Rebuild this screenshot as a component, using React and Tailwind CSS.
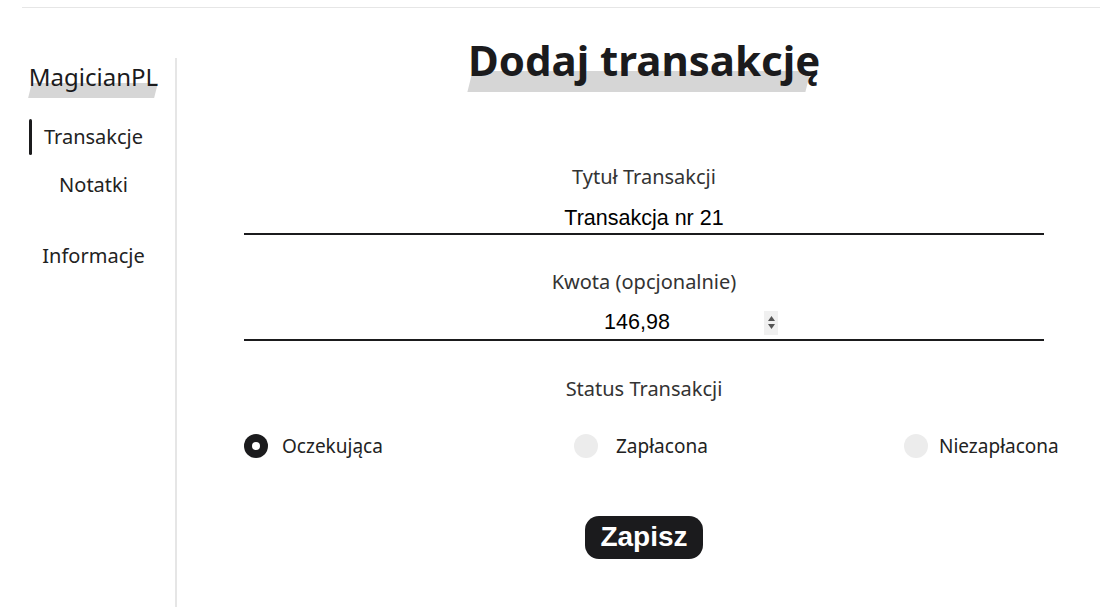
import { useState } from 'react';

const font = { fontFamily: '"Noto Sans", "Open Sans", sans-serif' };
const arial = { fontFamily: '"Liberation Sans", Arial, sans-serif' };

function NavItem({ label, active }) {
  return (
    <div className="relative flex h-[36px] items-center justify-center text-[20px] text-[#222]">
      {active && <span className="absolute left-[17px] top-0 h-full w-[3px] rounded-full bg-[#1b1b1d]" />}
      {label}
    </div>
  );
}

function Radio({ label, checked, gap }) {
  return (
    <label className="flex items-center text-[19px] text-[#222]">
      <span
        className={
          checked
            ? 'flex h-[24px] w-[24px] items-center justify-center rounded-full bg-[#1b1b1d]'
            : 'h-[24px] w-[24px] rounded-full bg-[#ececec]'
        }
      >
        {checked && <span className="h-[8px] w-[8px] rounded-full bg-white" />}
      </span>
      <span className={gap}>{label}</span>
    </label>
  );
}

export default function App() {
  const [title, setTitle] = useState('Transakcja nr 21');
  const [amount, setAmount] = useState('146,98');

  return (
    <div className="min-h-screen bg-white" style={font}>
      <div className="ml-[22px] mt-[7px] h-px bg-[#e6e6e6]" />
      <div className="flex">
        <aside className="mt-[50px] h-[549px] w-[177px] shrink-0 border-r-2 border-[#e6e6e6] pl-[12px]">
          <div className="flex justify-center pt-[3px]">
            <div className="relative">
              <span className="absolute left-[1px] top-[22px] h-[15px] w-[126px] -skew-x-[14deg] bg-[#d6d6d6]" />
              <span className="relative block text-[24px] leading-[32px] text-[#1b1b1d]">MagicianPL</span>
            </div>
          </div>
          <nav className="mt-[26px] flex flex-col">
            <NavItem label="Transakcje" active />
            <div className="h-[12px]" />
            <NavItem label="Notatki" />
            <div className="h-[35px]" />
            <NavItem label="Informacje" />
          </nav>
        </aside>

        <main className="flex-1 pl-[11px]">
          <div className="mx-auto flex w-[800px] flex-col items-center">
            <div className="relative mt-[20px]">
              <span className="absolute left-[2px] top-[43px] h-[21px] w-[338px] -skew-x-[14deg] bg-[#d6d6d6]" />
              <h1 className="relative text-[42px] font-bold leading-[64px] text-[#1b1b1d]">Dodaj transakcję</h1>
            </div>

            <form className="mt-[71px] flex w-full flex-col items-center" onSubmit={(e) => e.preventDefault()}>
              <label className="text-[20px] leading-[28px] text-[#333]">Tytuł Transakcji</label>
              <div className="mt-[10px] w-full border-b-2 border-[#1b1b1d]">
                <input
                  value={title}
                  onChange={(e) => setTitle(e.target.value)}
                  className="h-[32px] w-full bg-transparent pt-[2px] text-center text-[21.5px] text-black outline-none"
                  style={arial}
                />
              </div>

              <label className="mt-[33px] text-[20px] leading-[28px] text-[#333]">Kwota (opcjonalnie)</label>
              <div className="mt-[10px] flex w-full justify-center border-b-2 border-[#1b1b1d]">
                <div className="flex h-[33px] w-[268px] items-center">
                  <input
                    value={amount}
                    onChange={(e) => setAmount(e.target.value)}
                    className="h-full w-[254px] bg-transparent text-center text-[21.5px] text-black outline-none"
                    style={arial}
                  />
                  <span className="flex h-[24px] w-[14px] flex-col items-center justify-center gap-[3px] bg-[#f0f0f0]">
                    <svg width="7" height="5" viewBox="0 0 7 5"><path d="M0 5 L3.5 0 L7 5 Z" fill="#555" /></svg>
                    <svg width="7" height="5" viewBox="0 0 7 5"><path d="M0 0 L3.5 5 L7 0 Z" fill="#555" /></svg>
                  </span>
                </div>
              </div>

              <label className="mt-[34px] text-[20px] leading-[28px] text-[#333]">Status Transakcji</label>
              <div className="mt-[29px] grid w-full grid-cols-[330px_330px_auto]">
                <Radio label="Oczekująca" checked gap="ml-[14px]" />
                <Radio label="Zapłacona" gap="ml-[18px]" />
                <Radio label="Niezapłacona" gap="ml-[11px]" />
              </div>

              <button
                type="submit"
                className="mt-[55px] h-[43px] rounded-[14px] bg-[#1b1b1d] px-[15px] text-[28px] font-bold text-white"
                style={arial}
              >
                Zapisz
              </button>
            </form>
          </div>
        </main>
      </div>
    </div>
  );
}
